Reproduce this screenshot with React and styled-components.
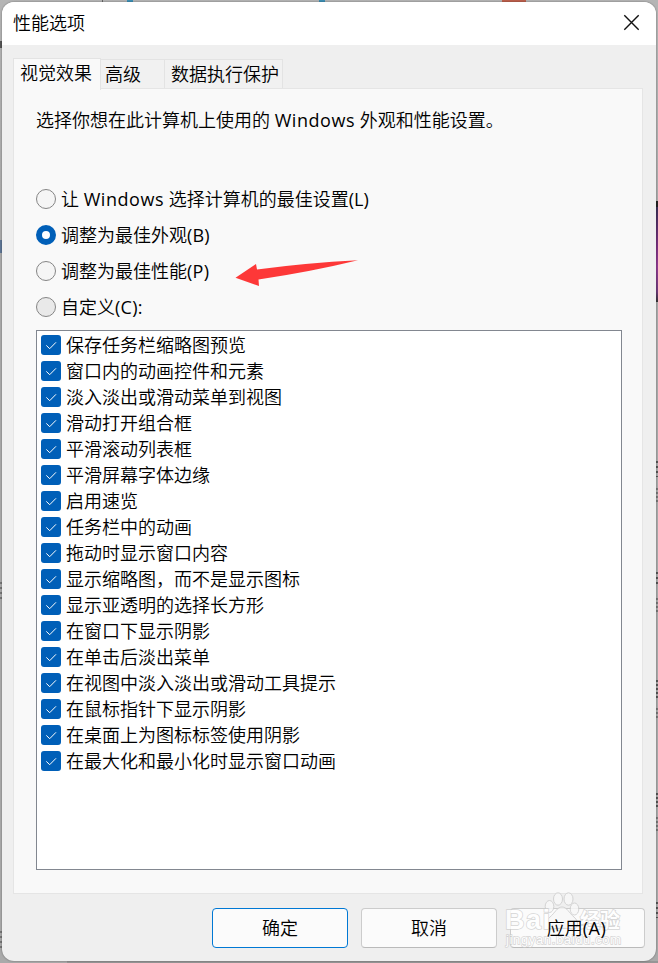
import React from "react";
import styled, { createGlobalStyle, css } from "styled-components";

const GlobalStyle = createGlobalStyle`
  * { box-sizing: border-box; }
  html, body { margin: 0; padding: 0; overflow: hidden; }
  body {
    font-family: "Open Sans", "Noto Sans CJK SC", sans-serif;
    font-size: 18px;
    font-weight: 350;
    line-height: 26px;
    color: #000;
  }
`;

const Desktop = styled.div`
  position: relative;
  width: 658px;
  height: 963px;
  padding: 2px;
  background:
    linear-gradient(#222, #222) 656px 201px / 2px 6px no-repeat,
    linear-gradient(#303050, #7c3080 45%, #923b92 65%, #6e3a7a 90%, #333) 656px 201px / 2px 101px no-repeat,
    linear-gradient(90deg, #3d8fb5, #3d8fb5) 127px 0 / 6px 2px no-repeat,
    linear-gradient(90deg, #3d8fb5, #3d8fb5) 319px 0 / 6px 2px no-repeat,
    linear-gradient(90deg, #bd604c, #bd604c) 502px 0 / 24px 2px no-repeat,
    linear-gradient(#666, #666) 102px 0 / 1px 2px no-repeat,
    linear-gradient(#555, #555) 0 41px / 2px 7px no-repeat,
    linear-gradient(#5e7595, #5e7595) 0 240px / 2px 13px no-repeat,
    repeating-linear-gradient(#777 0 2px, #aaa 2px 5px) 0 582px / 2px 20px no-repeat,
    repeating-linear-gradient(#777 0 2px, #aaa 2px 5px) 0 931px / 2px 20px no-repeat,
    repeating-linear-gradient(#555 0 2px, #aaa 2px 5px) 656px 461px / 2px 16px no-repeat,
    repeating-linear-gradient(#777 0 2px, #aaa 2px 4px) 656px 488px / 2px 14px no-repeat,
    repeating-linear-gradient(#555 0 2px, #aaa 2px 5px) 656px 572px / 2px 13px no-repeat,
    repeating-linear-gradient(#777 0 2px, #aaa 2px 4px) 656px 598px / 2px 14px no-repeat,
    repeating-linear-gradient(#555 0 2px, #aaa 2px 4px) 656px 680px / 2px 18px no-repeat,
    repeating-linear-gradient(#777 0 2px, #aaa 2px 4px) 656px 708px / 2px 12px no-repeat,
    repeating-linear-gradient(#555 0 2px, #aaa 2px 4px) 656px 793px / 2px 16px no-repeat,
    repeating-linear-gradient(#777 0 2px, #aaa 2px 4px) 656px 817px / 2px 16px no-repeat,
    repeating-linear-gradient(#555 0 2px, #aaa 2px 5px) 656px 902px / 2px 16px no-repeat,
    linear-gradient(#969696, #969696) 67px 961px / 591px 2px no-repeat,
    linear-gradient(#b5b5b5, #aaa 25%, #aaa);
`;

const Dialog = styled.div`
  display: flex;
  flex-direction: column;
  width: 654px;
  height: 959px;
  border-radius: 12px;
  overflow: hidden;
  background: #efefef;
  box-shadow: 0 0 2px rgba(0, 0, 0, 0.45);
`;

const TitleBar = styled.header`
  display: flex;
  align-items: center;
  justify-content: space-between;
  flex: none;
  height: 43px;
  padding: 0 16px 2px 11px;
  background: #fff;
`;

const CloseIcon = styled.svg`
  width: 17px;
  height: 17px;
`;

const Tabs = styled.nav`
  display: flex;
  align-items: flex-end;
  flex: none;
  height: 44px;
  margin: 0 11px;
`;

const Tab = styled.div`
  flex: none;
  width: ${(p) => p.$width}px;
  height: 30px;
  padding: 1px 0 0 ${(p) => p.$inset}px;
  border: 1px solid #e3e3e3;
  border-left: 0;
  border-bottom: 0;
  background: #f1f1f1;
  white-space: nowrap;
  ${(p) =>
    p.$active &&
    css`
      height: 32px;
      margin-bottom: -1px;
      z-index: 1;
      border-left: 1px solid #e3e3e3;
      background: #f9f9f9;
    `}
`;

const Panel = styled.main`
  display: flex;
  flex-direction: column;
  flex: none;
  width: 630px;
  height: 806px;
  margin: -1px 0 0 11px;
  padding: 18px 20px 0 22px;
  border: 1px solid #e5e5e5;
  background: #f9f9f9;
`;

const Description = styled.p`
  margin: 0 0 48px;
`;

const Latin = styled.span`
  font-weight: 400;
  letter-spacing: ${(p) => p.$tracking || 0}px;
`;

const RadioGroup = styled.div`
  display: flex;
  flex-direction: column;
  height: 149px;
`;

const RadioRow = styled.div`
  display: flex;
  align-items: center;
  gap: 5px;
  height: 36px;
  white-space: nowrap;
`;

const Radio = styled.span`
  flex: none;
  width: 20px;
  height: 20px;
  border-radius: 50%;
  border: ${(p) => (p.$checked ? "6px solid #005fb8" : "1px solid #858585")};
  background: ${(p) => (p.$checked ? "#fff" : p.$pressed ? "#e9e9e9" : "#f5f5f5")};
`;

const List = styled.div`
  width: 586px;
  height: 540px;
  padding: 1px 4px;
  border: 1px solid #828790;
  background: #fff;
`;

const ListRow = styled.div`
  display: flex;
  align-items: center;
  gap: 5px;
  height: 26px;
  white-space: nowrap;
`;

const CheckIcon = styled.svg`
  flex: none;
  width: 20px;
  height: 20px;
`;

const Footer = styled.footer`
  display: flex;
  justify-content: flex-end;
  gap: 13px;
  padding: 14px 11px 0 0;
`;

const Button = styled.button`
  width: ${(p) => p.$width || 136}px;
  height: 40px;
  padding: 0;
  border: 1px solid ${(p) => (p.$primary ? "#0078d4" : "#cccccc")};
  ${(p) => !p.$primary && "border-bottom-color: #bababa;"}
  border-radius: 4px;
  background: #fbfbfb;
  font: inherit;
  color: #000;
`;

const RaisedLabel = styled.span`
  position: relative;
  z-index: 2;
  margin-right: 2px;
`;

const Arrow = styled.svg`
  position: absolute;
  left: 234px;
  top: 258px;
  width: 126px;
  height: 30px;
`;

const Watermark = styled.svg`
  position: absolute;
  z-index: 1;
  left: 500px;
  top: 888px;
  width: 130px;
  height: 62px;
  opacity: 0.8;
  pointer-events: none;
`;

const tabs = [
  { label: "视觉效果", width: 88, inset: 6, active: true },
  { label: "高级", width: 64, inset: 4 },
  { label: "数据执行保护", width: 118, inset: 6 },
];

const choices = [
  {
    label: (
      <span>
        让 <Latin $tracking={0.55}>Windows</Latin> 选择计算机的最佳设置<Latin>(L)</Latin>
      </span>
    ),
  },
  { label: <span>调整为最佳外观<Latin $tracking={0.1}>(B)</Latin></span>, checked: true },
  { label: <span>调整为最佳性能<Latin $tracking={0.3}>(P)</Latin></span> },
  { label: <span>自定义<Latin $tracking={0.3}>(C):</Latin></span>, pressed: true },
];

const effects = [
  "保存任务栏缩略图预览",
  "窗口内的动画控件和元素",
  "淡入淡出或滑动菜单到视图",
  "滑动打开组合框",
  "平滑滚动列表框",
  "平滑屏幕字体边缘",
  "启用速览",
  "任务栏中的动画",
  "拖动时显示窗口内容",
  "显示缩略图，而不是显示图标",
  "显示亚透明的选择长方形",
  "在窗口下显示阴影",
  "在单击后淡出菜单",
  "在视图中淡入淡出或滑动工具提示",
  "在鼠标指针下显示阴影",
  "在桌面上为图标标签使用阴影",
  "在最大化和最小化时显示窗口动画",
];

function Checkbox() {
  return (
    <CheckIcon viewBox="0 0 20 20">
      <rect width="20" height="20" rx="3" fill="#005fb8" />
      <path d="M5.3 10.4 8.7 13.7 15 7.3" fill="none" stroke="#fff" strokeWidth="1" />
    </CheckIcon>
  );
}

export default function App() {
  return (
    <Desktop lang="zh-CN">
      <GlobalStyle />
      <Dialog>
        <TitleBar>
          <span>性能选项</span>
          <CloseIcon viewBox="0 0 17 17">
            <path d="M1.3 1.3 15.7 15.7M15.7 1.3 1.3 15.7" stroke="#111" strokeWidth="1.4" />
          </CloseIcon>
        </TitleBar>
        <Tabs>
          {tabs.map((t) => (
            <Tab key={t.label} $width={t.width} $inset={t.inset} $active={t.active}>
              {t.label}
            </Tab>
          ))}
        </Tabs>
        <Panel>
          <Description>
            选择你想在此计算机上使用的 <Latin $tracking={0.55}>Windows</Latin> 外观和性能设置。
          </Description>
          <RadioGroup>
            {choices.map((c, i) => (
              <RadioRow key={i}>
                <Radio $checked={c.checked} $pressed={c.pressed} />
                {c.label}
              </RadioRow>
            ))}
          </RadioGroup>
          <List>
            {effects.map((e) => (
              <ListRow key={e}>
                <Checkbox />
                {e}
              </ListRow>
            ))}
          </List>
        </Panel>
        <Footer>
          <Button $primary>确定</Button>
          <Button>取消</Button>
          <Button $width={135}>
            <RaisedLabel>应用<Latin $tracking={0.5}>(A)</Latin></RaisedLabel>
          </Button>
        </Footer>
      </Dialog>
      <Arrow viewBox="234 258 126 30">
        <path d="M358 260.3Q306 263 257 269.5L256 264 235.5 277.8 259 286 258.5 279.5Q310 272 358 260.3Z" fill="#fd3838" />
      </Arrow>
      <Watermark viewBox="500 888 130 62">
        <g fill="#f8f8f8" stroke="#ccc" strokeWidth="1">
          <ellipse cx="549.5" cy="906.5" rx="4.3" ry="6" />
          <ellipse cx="558" cy="899" rx="4.5" ry="6.2" />
          <ellipse cx="568.5" cy="899" rx="4.5" ry="6.2" />
          <ellipse cx="574.5" cy="909" rx="4.3" ry="6" />
          <path d="M562 907c5 0 7 6 12 10 6 5 4 13-3 12-6-1-12-1-18 0-7 1-9-7-3-12 5-4 7-10 12-10Z" />
        </g>
        <g fill="#fff" stroke="#ccc" strokeWidth="1.4" paintOrder="stroke" fontWeight="700">
          <text x="505" y="929" fontFamily="Liberation Sans" fontSize="27" textLength="45">Bai</text>
          <text x="580" y="928" fontFamily="Noto Sans CJK SC" fontSize="20">经验</text>
          <text x="506" y="944" fontFamily="Liberation Sans" fontSize="13" fontWeight="400" textLength="115">
            jingyan.baidu.com
          </text>
        </g>
      </Watermark>
    </Desktop>
  );
}
